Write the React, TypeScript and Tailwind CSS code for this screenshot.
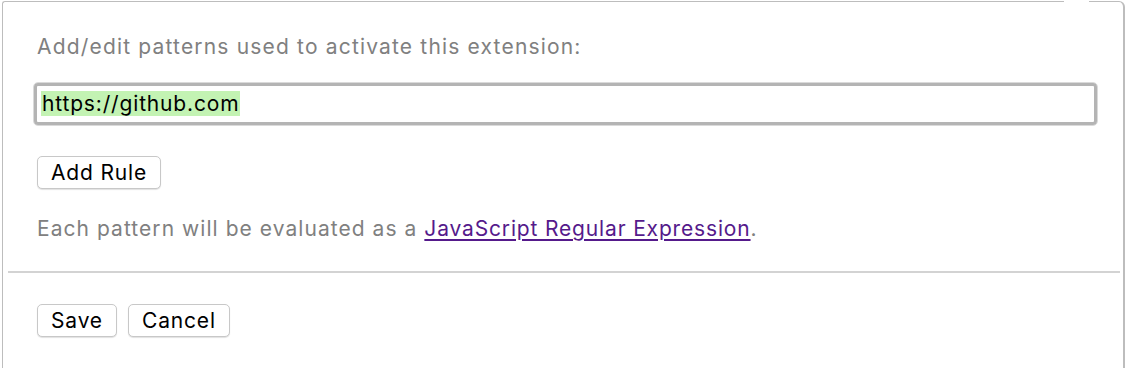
import { useState } from "react";

const font = { fontFamily: 'Inter, "Liberation Sans", Arial, sans-serif' };

function MacButton({ children }: { children: React.ReactNode }) {
  return (
    <button
      type="button"
      className="h-[33px] rounded-[5px] border border-[#c8c8c8] bg-white px-[13px] text-[21px] leading-none tracking-[0.04em] text-black shadow-[0_1px_1px_rgba(0,0,0,0.12)]"
    >
      {children}
    </button>
  );
}

export default function App() {
  const [value, setValue] = useState("https://github.com");

  return (
    <div className="relative h-[368px] w-[1128px] overflow-hidden bg-white" style={font}>
      {/* popover frame */}
      <div className="absolute left-[2px] top-[1px] h-[380px] w-[1062px] rounded-tl-[3px] border-l border-t border-[#bdbdbd]" />
      <div className="absolute right-[3px] top-[1px] h-[380px] w-[36px] rounded-tr-[6px] border-r-2 border-t border-[#bdbdbd]" />

      <div className="flex flex-col pt-[34px]">
        <p className="pl-[37px] text-[21px] leading-[26px] tracking-[0.056em] text-[#808080]">
          Add/edit patterns used to activate this extension:
        </p>

        <div className="ml-[33px] mr-[30px] mt-[22px] rounded-[5px] border border-[#dadada] p-0">
          <div className="rounded-[4px] border-[3px] border-[#b4b4b4] bg-white px-[4px] py-[5px]">
            <input
              value={value}
              onChange={(e) => setValue(e.target.value)}
              className="hidden"
            />
            <span className="inline-block bg-[#c3f3b3] px-[1px] text-[21px] leading-[25px] tracking-[0.04em] text-black">
              {value}
            </span>
          </div>
        </div>

        <div className="ml-[37px] mt-[30px]">
          <MacButton>Add Rule</MacButton>
        </div>

        <p className="mt-[27px] pl-[37px] text-[21px] leading-[26px] tracking-[0.05em] text-[#808080]">
          Each pattern will be evaluated as a{" "}
          <a href="#" className="tracking-[0.04em] text-[#551a8b] underline underline-offset-[3px]">
            JavaScript Regular Expression
          </a>
          .
        </p>

        <div className="ml-[8px] mr-[8px] mt-[29px] h-[2px] bg-[#d3d3d3]" />

        <div className="ml-[37px] mt-[31px] flex gap-[11px]">
          <MacButton>Save</MacButton>
          <MacButton>Cancel</MacButton>
        </div>
      </div>
    </div>
  );
}
